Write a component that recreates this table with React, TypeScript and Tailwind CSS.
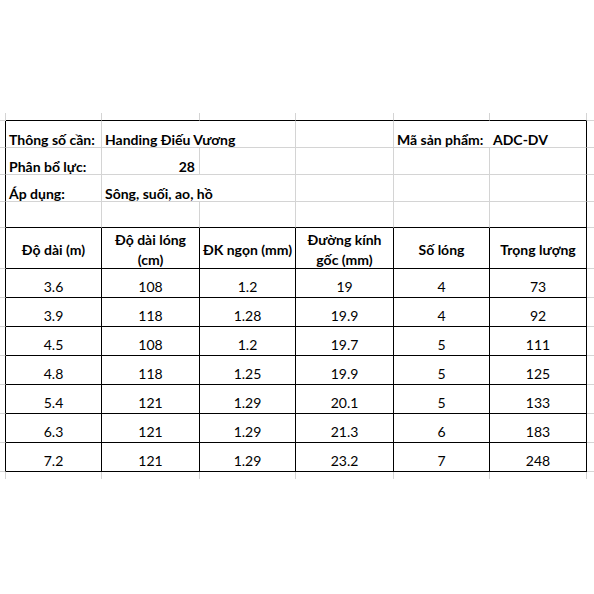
type Line = "none" | "gray" | "black";

// column widths (px) incl. the thin gridline margins left and right
const colW = [6, 96, 98, 96, 98, 96, 97, 7];
// row heights (px): spacer, 4 info rows, header, 7 data rows, spacer
const rowH = [8, 27, 27, 27, 26, 41, 29, 29, 29, 29, 29, 29, 29, 7];

const rightCls: Record<Line, string> = {
  none: "",
  gray: "border-r border-r-[#d4d4d4]",
  black: "border-r border-r-black",
};
const bottomCls: Record<Line, string> = {
  none: "",
  gray: "border-b border-b-[#d4d4d4]",
  black: "border-b border-b-black",
};

// vertical line on the right edge of column c in row r
function vLine(r: number, c: number): Line {
  if (c === 7) return "none";
  if (r === 0 || r === 13) return "gray";
  if (c === 0 || c === 6) return "black";
  if (r >= 5) return "black";
  // info rows: text overflowing hides some gridlines
  if (r === 1 && (c === 2 || c === 5)) return "none";
  if (r === 3 && c === 2) return "none";
  return "gray";
}

// horizontal line on the bottom edge of row r in column c
function hLine(r: number, c: number): Line {
  if (r === 13) return "none";
  if (r >= 1 && r <= 3) return "gray";
  if (c === 0 || c === 7) return "gray";
  return "black";
}

const headers: React.ReactNode[] = [
  "Độ dài (m)",
  <>
    Độ dài lóng
    <br />
    (cm)
  </>,
  "ĐK ngọn (mm)",
  <>
    Đường kính
    <br />
    gốc (mm)
  </>,
  "Số lóng",
  "Trọng lượng",
];

const rows = [
  ["3.6", "108", "1.2", "19", "4", "73"],
  ["3.9", "118", "1.28", "19.9", "4", "92"],
  ["4.5", "108", "1.2", "19.7", "5", "111"],
  ["4.8", "118", "1.25", "19.9", "5", "125"],
  ["5.4", "121", "1.29", "20.1", "5", "133"],
  ["6.3", "121", "1.29", "21.3", "6", "183"],
  ["7.2", "121", "1.29", "23.2", "7", "248"],
];

const info: Record<string, string> = {
  "1-1": "Thông số cần:",
  "1-2": "Handing Điếu Vương",
  "1-5": "Mã sản phẩm:",
  "1-6": "ADC-DV",
  "2-1": "Phân bổ lực:",
  "3-1": "Áp dụng:",
  "3-2": "Sông, suối, ao, hồ",
};

function cellContent(r: number, c: number) {
  if (c < 1 || c > 6) return null;
  if (r >= 1 && r <= 4) {
    if (r === 2 && c === 2) {
      return (
        <div className="flex h-full w-full items-end justify-end pr-[4px] font-bold leading-[14px]">
          28
        </div>
      );
    }
    const t = info[`${r}-${c}`];
    if (!t) return null;
    return (
      <div className="flex h-full items-end whitespace-nowrap pl-[3px] font-bold leading-[14px]">
        {t}
      </div>
    );
  }
  if (r === 5) {
    return (
      <div className="flex h-full items-center justify-center pt-[4px] text-center font-bold leading-[20px]">
        <span>{headers[c - 1]}</span>
      </div>
    );
  }
  if (r >= 6 && r <= 12) {
    return (
      <div className="flex h-full items-end justify-center leading-[20px]">
        {rows[r - 6][c - 1]}
      </div>
    );
  }
  return null;
}

export default function App() {
  return (
    <div
      className="min-h-[594px] w-[594px] bg-white pt-[113px] text-[14px] text-black"
      style={{ fontFamily: "Lato, 'Noto Sans', sans-serif" }}
    >
      <div
        className="grid"
        style={{
          gridTemplateColumns: colW.map((w) => `${w}px`).join(" "),
          gridTemplateRows: rowH.map((h) => `${h}px`).join(" "),
        }}
      >
        {rowH.map((_, r) =>
          colW.map((_, c) => (
            <div
              key={`${r}-${c}`}
              className={`overflow-visible ${rightCls[vLine(r, c)]} ${bottomCls[hLine(r, c)]}`}
            >
              {cellContent(r, c)}
            </div>
          ))
        )}
      </div>
    </div>
  );
}
